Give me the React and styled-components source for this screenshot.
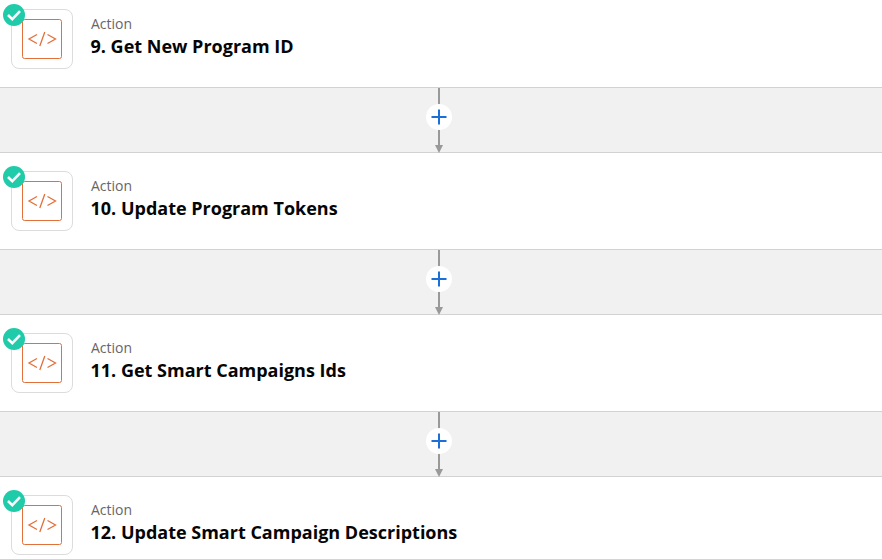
import React from "react";
import styled, { createGlobalStyle } from "styled-components";

const GlobalStyle = createGlobalStyle`
  html, body {
    margin: 0;
    padding: 0;
    height: 100%;
    overflow: hidden;
    background: #f1f1f1;
    font-family: "Open Sans", sans-serif;
  }
`;

const Flow = styled.div`
  width: 882px;
  height: 559px;
  overflow: hidden;
`;

const Steps = styled.div`
  display: flex;
  flex-direction: column;
  margin-top: -10px;
`;

const Card = styled.div`
  box-sizing: border-box;
  height: 98px;
  flex: none;
  display: flex;
  align-items: flex-start;
  gap: 18px;
  padding: 18px 11px 0;
  background: #fff;
  border-top: 1px solid #d2d2d2;
  border-bottom: 1px solid #d2d2d2;
`;

const IconBox = styled.div`
  position: relative;
  box-sizing: border-box;
  width: 62px;
  height: 60px;
  flex: none;
  display: flex;
  align-items: center;
  justify-content: center;
  background: #fff;
  border: 1px solid #dcdcdc;
  border-radius: 8px;
`;

const CodeIcon = styled.svg`
  width: 40px;
  height: 40px;
  display: block;
`;

const CheckBadge = styled.svg`
  position: absolute;
  left: -9px;
  top: -6px;
  width: 22px;
  height: 22px;
`;

const Texts = styled.div`
  display: flex;
  flex-direction: column;
  padding-top: 6px;
`;

const Kicker = styled.div`
  font-size: 14px;
  line-height: 18px;
  color: #666;
`;

const Title = styled.div`
  font-size: 18px;
  line-height: 24px;
  margin-top: 1px;
  margin-left: -0.5px;
  font-weight: 700;
  color: #050505;
`;

const Connector = styled.div`
  position: relative;
  height: 64px;
  flex: none;
`;

const Line = styled.div`
  position: absolute;
  left: 438px;
  top: 0;
  bottom: 6px;
  width: 2px;
  background: #999;
`;

const Arrow = styled.div`
  position: absolute;
  left: 435px;
  bottom: -1px;
  width: 0;
  height: 0;
  border-left: 4px solid transparent;
  border-right: 4px solid transparent;
  border-top: 8px solid #999;
`;

const AddButton = styled.button`
  position: absolute;
  left: 426px;
  top: 16px;
  width: 26px;
  height: 26px;
  padding: 0;
  border: none;
  border-radius: 50%;
  background: #fff;
  display: flex;
  align-items: center;
  justify-content: center;
`;

const steps = [
  "9. Get New Program ID",
  "10. Update Program Tokens",
  "11. Get Smart Campaigns Ids",
  "12. Update Smart Campaign Descriptions",
];

const Step = ({ title }) => (
  <Card>
    <IconBox>
      <CodeIcon viewBox="0 0 40 40" fill="none">
        <rect x="0.5" y="0.5" width="39" height="39" rx="2" stroke="#e2703a" />
        <path
          d="M15 15.5 L7 20 L15 24.5 M25.5 15.5 L33.5 20 L25.5 24.5 M22.8 13 L17.8 27"
          stroke="#e2703a"
          strokeWidth="1.3"
        />
      </CodeIcon>
      <CheckBadge viewBox="0 0 22 22" fill="none">
        <circle cx="11" cy="11" r="11" fill="#1fcba8" />
        <path d="M5 11 L9.3 15.2 L17 7.2" stroke="#fff" strokeWidth="2.6" />
      </CheckBadge>
    </IconBox>
    <Texts>
      <Kicker>Action</Kicker>
      <Title>{title}</Title>
    </Texts>
  </Card>
);

const Link = () => (
  <Connector>
    <Line />
    <Arrow />
    <AddButton>
      <svg width="16" height="16" viewBox="0 0 16 16" fill="none">
        <path d="M8 0.5 V15.5 M0.5 8 H15.5" stroke="#1d6fd8" strokeWidth="2" />
      </svg>
    </AddButton>
  </Connector>
);

export default function App() {
  return (
    <Flow>
      <GlobalStyle />
      <Steps>
        {steps.map((title, i) => (
          <React.Fragment key={title}>
            {i > 0 && <Link />}
            <Step title={title} />
          </React.Fragment>
        ))}
      </Steps>
    </Flow>
  );
}
